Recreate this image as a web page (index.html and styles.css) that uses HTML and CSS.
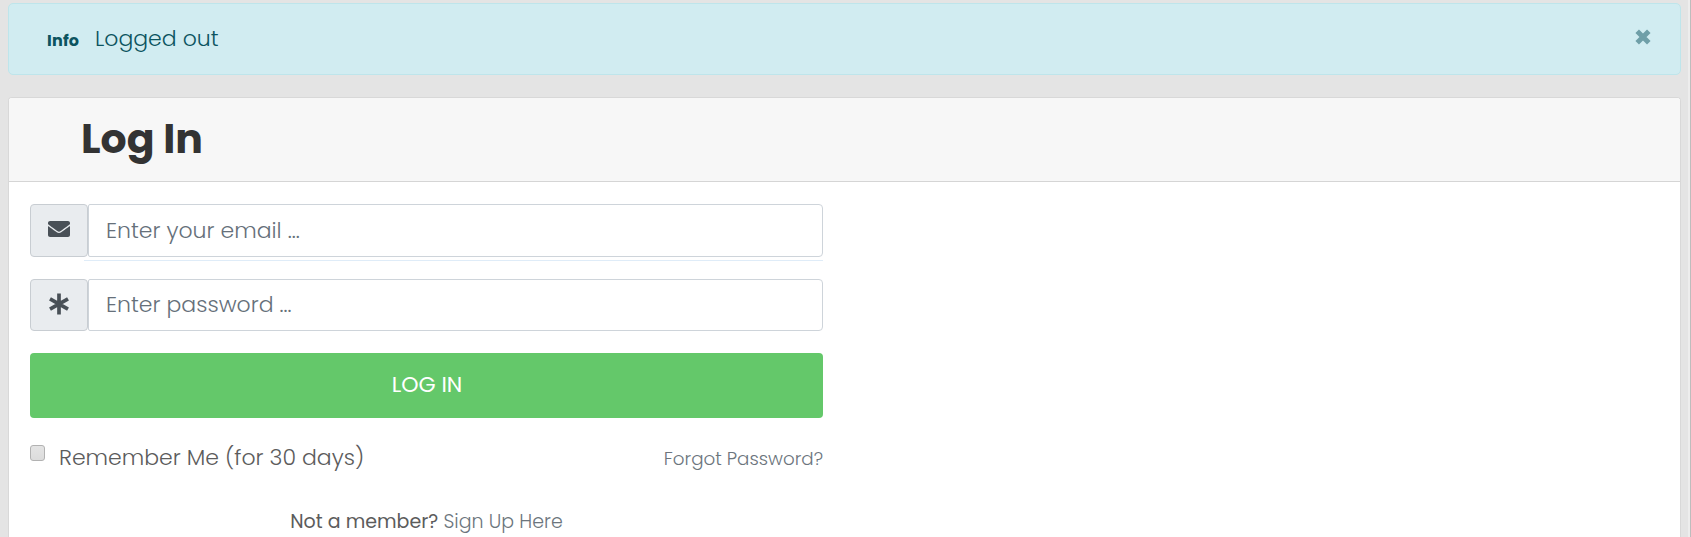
FILE: index.html
```html
<!DOCTYPE html>
<html lang="en">
<head>
<meta charset="utf-8">
<title>Log In</title>
<link rel="stylesheet" href="styles.css">
</head>
<body>
<main class="page">
  <div class="alert" role="alert">
    <strong class="alert-label">Info</strong>
    <span class="alert-text">Logged out</span>
    <button class="close" type="button" aria-label="Close"><svg viewBox="0 0 16 16" width="16" height="16"><path d="M2.2 2.2 13.8 13.8M13.8 2.2 2.2 13.8" stroke="currentColor" stroke-width="5"/></svg></button>
  </div>
  <section class="card">
    <header class="card-header"><h1 class="title">Log In</h1></header>
    <form class="card-body">
      <div class="group group-email">
        <span class="addon"><svg class="mail" viewBox="0 0 512 384" width="22" height="16" preserveAspectRatio="none"><path fill="currentColor" d="M502.3 126.800c3.900-3.100 9.700-.2 9.700 4.700V336c0 26.500-21.500 48-48 48H48c-26.500 0-48-21.500-48-48V131.600c0-5 5.700-7.800 9.700-4.700 22.400 17.400 52.100 39.500 154.100 113.600 21.100 15.400 56.700 47.800 92.200 47.600 35.700.3 72-32.800 92.300-47.600 102-74.100 131.600-96.300 154-113.700zM256 256c23.200.4 56.600-29.200 73.400-41.400 132.700-96.300 142.800-104.700 173.400-128.700 5.800-4.500 9.200-11.500 9.200-18.900V48c0-26.500-21.500-48-48-48H48C21.500 0 0 21.500 0 48v19c0 7.400 3.400 14.300 9.200 18.900 30.600 23.900 40.700 32.400 173.400 128.700 16.800 12.200 50.200 41.800 73.400 41.400z"/></svg></span>
        <input class="field email" type="text" placeholder="Enter your email ...">
      </div>
      <div class="group">
        <span class="addon"><svg class="star" viewBox="0 0 22 22" width="22" height="22"><path d="M11 0.500V21.500M2 5.800 20 16.200M20 5.800 2 16.200" stroke="currentColor" stroke-width="3.700"/></svg></span>
        <input class="field password" type="text" placeholder="Enter password ...">
      </div>
      <button class="submit" type="button">LOG IN</button>
      <div class="options">
        <label class="remember"><input class="check" type="checkbox"><span class="remember-text">Remember Me (for 30 days)</span></label>
        <a class="forgot">Forgot Password?</a>
      </div>
      <p class="signup"><span class="question">Not a member?</span> <a class="signup-link">Sign Up Here</a></p>
    </form>
  </section>
</main>
<div class="edge"></div>
</body>
</html>
```
FILE: styles.css
```css
* { box-sizing: border-box; }
body {
  margin: 0;
  height: 537px;
  overflow: hidden;
  display: flex;
  background: #e4e4e4;
  font-family: Poppins, Inter, "Open Sans", sans-serif;
  font-size: 22px;
  font-weight: 300;
  color: #5c5c5c;
}
.page { flex: 1; padding: 3px 7px 0 8px; }
.edge { width: 3px; background: #ededed; border-right: 1px solid #bdbdbd; }
.alert {
  display: flex;
  align-items: baseline;
  height: 72px;
  padding: 20px 29px 0 38px;
  border: 1px solid #bee5eb;
  border-radius: 5px;
  background: #d1ecf1;
  color: #0c5460;
}
.alert-label { width: 48px; font-size: 16px; font-weight: 700; line-height: 30px; letter-spacing: .2px; }
.alert-text { line-height: 30px; }
.close { margin-left: auto; align-self: flex-start; margin-top: 5px; padding: 0; border: 0; background: none; color: #6f9fa8; line-height: 0; }
.card {
  height: 440px;
  margin-top: 22px;
  border: 1px solid #d8d8d8;
  border-bottom: 0;
  border-radius: 4px 4px 0 0;
  background: #fff;
}
.card-header { height: 84px; padding: 11px 72px; border-bottom: 1px solid #d5d5d5; background: #f7f7f7; border-radius: 3px 3px 0 0; }
.title { margin: 0; font-size: 41px; line-height: 60px; font-weight: 700; color: #333; }
.card-body { width: 814px; padding: 22px 0 0 21px; }
.group { display: flex; width: 793px; height: 52px; margin-bottom: 22px; }
.group-email { height: 57px; margin-bottom: 18px; padding-bottom: 4px; background: linear-gradient(#dfecf8, #dfecf8) 54px 56px / 739px 1px no-repeat; }
.addon {
  width: 58px;
  display: flex;
  align-items: center;
  justify-content: center;
  border: 1px solid #c8cdd2;
  border-radius: 4px;
  background: #e9ecef;
  color: #495057;
}
.mail { margin-bottom: 4px; }
.star { margin-bottom: 3px; }
.field {
  flex: 1;
  min-width: 0;
  padding: 0 17px;
  border: 1px solid #ced4da;
  border-radius: 2px 4px 4px 2px;
  background: #fff;
  font: inherit;
}
.field::placeholder { color: #66707a; opacity: 1; }
.password { padding-bottom: 2px; }
.submit {
  display: block;
  width: 793px;
  height: 65px;
  padding: 0 0 2px 1px;
  border: 0;
  border-radius: 4px;
  background: #64c86a;
  color: #fff;
  font: inherit;
  font-weight: 400;
}
.options { display: flex; justify-content: space-between; align-items: flex-start; width: 793px; height: 64px; padding-top: 22px; }
.remember { display: flex; }
.check {
  appearance: none;
  width: 15px;
  height: 16px;
  margin: 5px 14px 0 0;
  border: 1px solid #b2b2b2;
  border-radius: 3px;
  background: linear-gradient(#e4e4e4, #dcdcdc);
}
.remember-text { line-height: 35px; }
.forgot { font-size: 18.3px; line-height: 38px; color: #6c757d; }
.signup { width: 793px; margin: 25px 0 0; font-size: 19px; line-height: 30px; text-align: center; }
.question { font-weight: 400; }
.signup-link { color: #6c757d; }
```
